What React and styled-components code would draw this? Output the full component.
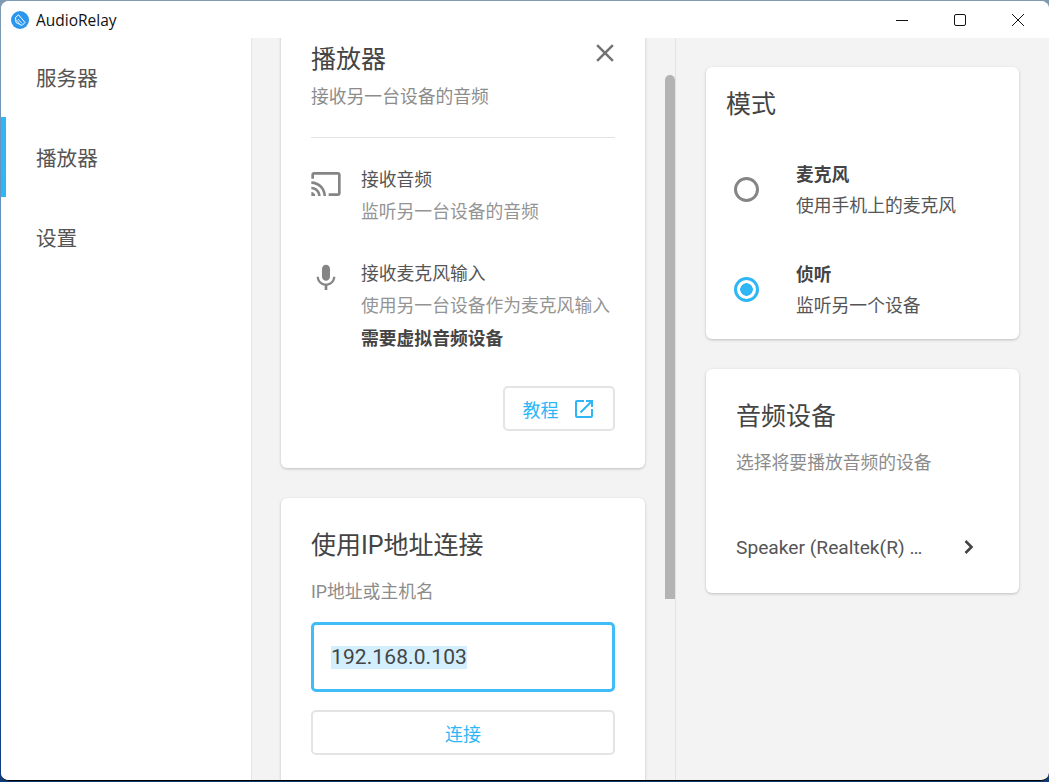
import React from 'react'
import styled, { createGlobalStyle } from 'styled-components'
import { MdCast, MdMic, MdClose, MdOpenInNew } from 'react-icons/md'

const CJK = `Roboto, "Noto Sans CJK SC", sans-serif`
const BLUE = '#2fb6f6'

const GlobalStyle = createGlobalStyle`
    html, body {
        margin: 0;
        padding: 0;
        overflow: hidden;
    }
    body {
        font-family: ${CJK};
    }
    * {
        box-sizing: border-box;
    }
`

function App() {
    return (
        <>
        <GlobalStyle />
        <Desktop>
            <Window>
                <TitleBar>
                    <AppName>
                        <Logo />
                        <span>AudioRelay</span>
                    </AppName>
                    <WindowButtons>
                        <WindowButton>
                            <svg width="12" height="12" viewBox="0 0 12 12"><path d="M0 6.5h12" stroke="#111" strokeWidth="1" fill="none" /></svg>
                        </WindowButton>
                        <WindowButton>
                            <svg width="12" height="12" viewBox="0 0 12 12"><rect x="0.5" y="0.5" width="11" height="11" rx="1.5" stroke="#111" strokeWidth="1" fill="none" /></svg>
                        </WindowButton>
                        <WindowButton>
                            <svg width="12" height="12" viewBox="0 0 12 12"><path d="M0 0l12 12M12 0L0 12" stroke="#111" strokeWidth="1" fill="none" /></svg>
                        </WindowButton>
                    </WindowButtons>
                </TitleBar>
                <Body>
                    <Sidebar>
                        <NavItem>服务器</NavItem>
                        <NavItem $active>播放器</NavItem>
                        <NavItem>设置</NavItem>
                    </Sidebar>
                    <Middle>
                        <ScrollThumb />
                        <ScrollContent>
                            <PlayerCard>
                                <CloseButton><MdClose size={30} /></CloseButton>
                                <CardTitle>播放器</CardTitle>
                                <CardSub>接收另一台设备的音频</CardSub>
                                <Divider />
                                <Feature>
                                    <FeatureIcon><MdCast size={32} /></FeatureIcon>
                                    <div>
                                        <FeatureTitle>接收音频</FeatureTitle>
                                        <FeatureText>监听另一台设备的音频</FeatureText>
                                    </div>
                                </Feature>
                                <Feature>
                                    <FeatureIcon><MdMic size={32} /></FeatureIcon>
                                    <div>
                                        <FeatureTitle>接收麦克风输入</FeatureTitle>
                                        <FeatureText>使用另一台设备作为麦克风输入</FeatureText>
                                        <FeatureBold>需要虚拟音频设备</FeatureBold>
                                    </div>
                                </Feature>
                                <TutorialRow>
                                    <OutlineButton $small>
                                        教程
                                        <MdOpenInNew size={24} />
                                    </OutlineButton>
                                </TutorialRow>
                            </PlayerCard>
                            <ConnectCard>
                                <CardTitle>使用IP地址连接</CardTitle>
                                <InputLabel>IP地址或主机名</InputLabel>
                                <AddressBox><Selected>192.168.0.103</Selected></AddressBox>
                                <OutlineButton>连接</OutlineButton>
                            </ConnectCard>
                        </ScrollContent>
                    </Middle>
                    <Right>
                        <ModeCard>
                            <ModeTitle>模式</ModeTitle>
                            <ModeRow>
                                <Radio />
                                <div>
                                    <ModeName>麦克风</ModeName>
                                    <ModeText>使用手机上的麦克风</ModeText>
                                </div>
                            </ModeRow>
                            <ModeRow>
                                <Radio $checked />
                                <div>
                                    <ModeName>侦听</ModeName>
                                    <ModeText>监听另一个设备</ModeText>
                                </div>
                            </ModeRow>
                        </ModeCard>
                        <DeviceCard>
                            <DeviceTitle>音频设备</DeviceTitle>
                            <DeviceSub>选择将要播放音频的设备</DeviceSub>
                            <DeviceRow>
                                <DeviceName>Speaker (Realtek(R) …</DeviceName>
                                <svg width="12" height="16" viewBox="0 0 12 16">
                                    <path d="M2.5 2l6 6-6 6" stroke="#444" strokeWidth="2.6" fill="none" />
                                </svg>
                            </DeviceRow>
                        </DeviceCard>
                    </Right>
                </Body>
            </Window>
        </Desktop>
        </>
    )
}

function Logo() {
    return (
        <svg width="18" height="18" viewBox="0 0 18 18">
            <circle cx="9" cy="9" r="9" fill="#2b96ee" />
            <path d="M4.5 6.5L7.5 3.8L14 11.5L11 14.5L5 11.5Z" stroke="#fff" strokeWidth="1" fill="none" />
            <path d="M7 8L11 12.5M5.5 9L8.5 12.5" stroke="#fff" strokeWidth="0.8" fill="none" />
        </svg>
    )
}

const Desktop = styled.div`
    width: 1049px;
    height: 782px;
    padding: 1px 0 1px 1px;
    background: linear-gradient(180deg, #7f9bb2 0%, #5f8fc0 30%, #1a62b8 75%, #123a78 100%);
`

const Window = styled.div`
    width: 1048px;
    height: 780px;
    background: #f3f3f3;
    border-radius: 8px;
    border-bottom: 1px solid #000;
    overflow: hidden;
    display: flex;
    flex-direction: column;
`

const TitleBar = styled.div`
    height: 37px;
    flex-shrink: 0;
    background: #fff;
    display: flex;
    align-items: center;
    justify-content: space-between;
`

const AppName = styled.div`
    display: flex;
    align-items: center;
    gap: 7px;
    padding-left: 10px;
    font-family: "Open Sans", sans-serif;
    font-size: 15.5px;
    color: #111;
`

const WindowButtons = styled.div`
    display: flex;
    padding-right: 2px;
`

const WindowButton = styled.div`
    width: 58px;
    height: 37px;
    display: flex;
    align-items: center;
    justify-content: center;
`

const Body = styled.div`
    flex: 1;
    min-height: 0;
    display: flex;
`

const Sidebar = styled.nav`
    width: 251px;
    flex-shrink: 0;
    background: #fff;
    border-right: 1px solid #e4e4e4;
`

const NavItem = styled.div`
    height: 80px;
    margin-top: ${props => props.$active ? '-1px' : '0'};
    margin-bottom: ${props => props.$active ? '1px' : '0'};
    display: flex;
    align-items: center;
    padding-left: ${props => props.$active ? '30px' : '35px'};
    padding-bottom: ${props => props.$active ? '1px' : '3px'};
    border-left: ${props => props.$active ? `5px solid ${BLUE}` : 'none'};
    font-size: 20.6px;
    color: #555;
`

const Middle = styled.main`
    position: relative;
    width: 424px;
    flex-shrink: 0;
    overflow: hidden;
    border-right: 1px solid #e2e2e2;
`

const ScrollThumb = styled.div`
    position: absolute;
    top: 37px;
    right: 0;
    width: 10px;
    height: 524px;
    border-radius: 5px 5px 0 0;
    background: #b3b3b3;
`

const ScrollContent = styled.div`
    width: 364px;
    margin: -29px 0 0 29px;
    display: flex;
    flex-direction: column;
    gap: 30px;
`

const Card = styled.section`
    position: relative;
    background: #fff;
    border-radius: 6px;
    box-shadow: 0 1px 3px rgba(0, 0, 0, 0.22);
`

const PlayerCard = styled(Card)`
    height: 459px;
    padding: 30px;
`

const ConnectCard = styled(Card)`
    padding: 27px 30px 30px;
`

const CloseButton = styled.div`
    position: absolute;
    top: 29px;
    right: 25px;
    height: 30px;
    color: #757575;
`

const CardTitle = styled.h2`
    margin: 0;
    height: 40px;
    line-height: 42px;
    font-size: 25px;
    font-weight: 400;
    color: #444;
`

const CardSub = styled.div`
    margin-top: 1px;
    line-height: 34px;
    font-size: 17.8px;
    color: #8c8c8c;
`

const Divider = styled.div`
    height: 1px;
    margin: 23px 0 26px;
    background: #e4e4e4;
`

const Feature = styled.div`
    display: flex;
    margin-bottom: 30px;
`

const FeatureIcon = styled.div`
    width: 50px;
    flex-shrink: 0;
    height: 34px;
    margin-top: 4px;
    margin-left: -1px;
    margin-right: 1px;
    color: #858585;
`

const FeatureTitle = styled.div`
    line-height: 32px;
    font-size: 17.8px;
    color: #555;
`

const FeatureText = styled.div`
    line-height: 32px;
    font-size: 17.8px;
    color: #949494;
`

const FeatureBold = styled.div`
    line-height: 34px;
    font-size: 17.8px;
    font-weight: 700;
    color: #444;
`

const TutorialRow = styled.div`
    display: flex;
    justify-content: flex-end;
`

const OutlineButton = styled.div`
    width: ${props => props.$small ? '112px' : '100%'};
    height: 45px;
    display: flex;
    align-items: center;
    justify-content: center;
    gap: 13px;
    border: 2px solid #e4e4e4;
    border-radius: 5px;
    background: #fff;
    font-size: 18px;
    color: ${BLUE};
`

const InputLabel = styled.div`
    margin-top: 9px;
    line-height: 36px;
    font-size: 17.8px;
    color: #8c8c8c;
`

const AddressBox = styled.div`
    height: 70px;
    margin: 12px 0 18px;
    padding-left: 17px;
    display: flex;
    align-items: center;
    border: 3px solid #40bcf9;
    border-radius: 5px;
    font-size: 21px;
    letter-spacing: 0.1px;
    color: #444;
`

const Selected = styled.span`
    line-height: 23px;
    background: #d3effd;
`

const Right = styled.aside`
    flex: 1;
    padding: 29px 30px 0;
    display: flex;
    flex-direction: column;
    gap: 30px;
`

const ModeCard = styled(Card)`
    height: 272px;
    padding: 17px 20px 0;
`

const ModeTitle = styled(CardTitle)`
    margin-bottom: 35px;
`

const ModeRow = styled.div`
    height: 100px;
    display: flex;
    align-items: flex-start;
    padding-left: 8px;
    gap: 37px;
`

const Radio = styled.div`
    width: 25px;
    height: 25px;
    margin-top: 18px;
    flex-shrink: 0;
    border-radius: 50%;
    border: 3px solid ${props => props.$checked ? BLUE : '#858585'};
    background: ${props => props.$checked ? `radial-gradient(circle, ${BLUE} 0 6px, #fff 6.5px)` : '#fff'};
`

const ModeName = styled.div`
    line-height: 32px;
    font-size: 17.8px;
    font-weight: 700;
    color: #444;
`

const ModeText = styled.div`
    line-height: 30px;
    font-size: 17.8px;
    color: #555;
`

const DeviceCard = styled(Card)`
    height: 224px;
    padding: 27px 30px 0;
`

const DeviceTitle = styled(CardTitle)``

const DeviceSub = styled(CardSub)`
    margin-top: 10px;
`

const DeviceRow = styled.div`
    margin-top: 52px;
    height: 30px;
    display: flex;
    align-items: center;
    justify-content: space-between;
    padding-right: 14px;
`

const DeviceName = styled.div`
    font-size: 19.2px;
    color: #555;
`

export default App
